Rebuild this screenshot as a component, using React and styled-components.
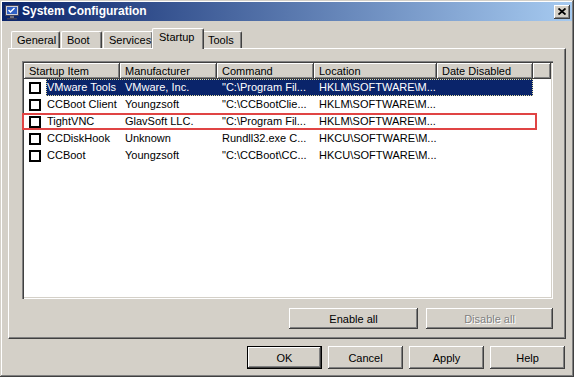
import React from "react";
import styled, { createGlobalStyle, css } from "styled-components";

const Global = createGlobalStyle`
  html, body { margin: 0; padding: 0; background: #d4d0c8; }
  body { font-family: "Liberation Sans", Arial, sans-serif; font-size: 11px; color: #000; }
  * { box-sizing: border-box; }
`;

const raised = css`
  box-shadow: inset -1px -1px #404040, inset 1px 1px #ffffff, inset -2px -2px #808080, inset 2px 2px #d4d0c8;
`;

const Window = styled.div`
  width: 574px;
  height: 377px;
  background: #d4d0c8;
  padding: 2px;
  display: flex;
  flex-direction: column;
  box-shadow: inset -1px -1px #404040, inset 1px 1px #d4d0c8, inset -2px -2px #808080, inset 2px 2px #ffffff;
`;

const TitleBar = styled.div`
  height: 19px;
  display: flex;
  align-items: center;
  padding: 0 2px 0 2px;
  gap: 2px;
  background: linear-gradient(to right, #0a246a 0%, #a6caf0 100%);
`;

const TitleText = styled.div`
  flex: 1;
  color: #fff;
  font-weight: bold;
  font-size: 12px;
  line-height: 19px;
  white-space: nowrap;
`;

const CloseButton = styled.div`
  width: 16px;
  height: 14px;
  background: #d4d0c8;
  display: flex;
  align-items: center;
  justify-content: center;
  ${raised};
`;

const Content = styled.div`
  flex: 1;
  display: flex;
  flex-direction: column;
  padding: 0 6px;
`;

const TabRow = styled.div`
  height: 27px;
  display: flex;
  align-items: flex-end;
  padding-left: 3px;
  position: relative;
  z-index: 1;
`;

const Tab = styled.div`
  width: ${(p) => p.$w}px;
  height: ${(p) => (p.$active ? 21 : 17)}px;
  margin: ${(p) => (p.$active ? "0 -2px -1px -2px" : "0 1px 0 0")};
  padding: ${(p) => (p.$active ? "2px 0 0 6px" : "2px 0 0 5px")};
  background: #d4d0c8;
  border-top: 1px solid #fff;
  border-left: 1px solid #fff;
  border-right: 1px solid #404040;
  border-radius: 2px 2px 0 0;
  box-shadow: inset -1px 0 #808080;
  line-height: 13px;
  white-space: nowrap;
  position: relative;
  z-index: ${(p) => (p.$active ? 2 : 0)};
`;

const Panel = styled.div`
  height: 291px;
  padding: 12px 12px 0 13px;
  border-top: 1px solid #fff;
  border-left: 1px solid #fff;
  border-right: 1px solid #404040;
  border-bottom: 1px solid #404040;
  box-shadow: inset -1px -1px #808080;
  display: flex;
  flex-direction: column;
`;

const List = styled.div`
  position: relative;
  height: 238px;
  background: #fff;
  padding: 2px;
  box-shadow: inset 1px 1px #808080, inset 2px 2px #404040, inset -1px -1px #ffffff, inset -2px -2px #d4d0c8;
  overflow: hidden;
`;

const cols = "96px 97px 97px 123px 96px 1fr";

const HeaderRow = styled.div`
  display: grid;
  grid-template-columns: ${cols};
  height: 16px;
`;

const HeaderCell = styled.div`
  background: #d4d0c8;
  padding-left: 5px;
  line-height: 16px;
  white-space: nowrap;
  overflow: hidden;
  box-shadow: inset -1px -1px #404040, inset 1px 1px #ffffff, inset -2px -2px #808080;
`;

const Row = styled.div`
  display: flex;
  height: 17px;
  align-items: stretch;
`;

const CheckCell = styled.div`
  width: 22px;
  display: flex;
  align-items: center;
  padding-left: 5px;
`;

const Check = styled.div`
  width: 12px;
  height: 12px;
  border: 2px solid #000;
  background: #fff;
`;

const Selection = styled.div`
  display: grid;
  grid-template-columns: 74px 97px 97px 123px 96px;
  background: ${(p) => (p.$selected ? "#0a246a" : "transparent")};
  color: ${(p) => (p.$selected ? "#fff" : "#000")};
  outline: ${(p) => (p.$selected ? "1px dotted #e8e0a0" : "none")};
  outline-offset: -1px;
`;

const Cell = styled.div`
  padding-left: ${(p) => (p.$first ? 1 : 5)}px;
  line-height: 17px;
  white-space: nowrap;
  overflow: hidden;
`;

const Highlight = styled.div`
  position: absolute;
  left: 0;
  top: 52px;
  width: 515px;
  height: 17px;
  border: 2px solid #e04444;
  pointer-events: none;
`;

const ButtonRow = styled.div`
  display: flex;
  justify-content: flex-end;
  gap: ${(p) => p.$gap}px;
  margin-top: ${(p) => p.$top}px;
  padding-right: ${(p) => p.$right || 0}px;
`;

const Button = styled.div`
  width: ${(p) => p.$w}px;
  height: ${(p) => p.$h}px;
  background: #d4d0c8;
  display: flex;
  align-items: center;
  justify-content: center;
  color: ${(p) => (p.$disabled ? "#808080" : "#000")};
  text-shadow: ${(p) => (p.$disabled ? "1px 1px #ffffff" : "none")};
  ${(p) =>
    p.$default
      ? css`
          box-shadow: inset 0 0 0 1px #000, inset -2px -2px #404040, inset 2px 2px #ffffff, inset -3px -3px #808080;
        `
      : raised};
`;

const AppIcon = () => (
  <svg width="16" height="16" viewBox="0 0 16 16">
    <rect x="1.5" y="1.5" width="13" height="10" fill="#d0d0d8" stroke="#404058" />
    <rect x="3" y="3" width="10" height="7" fill="#2f5fc4" />
    <path d="M4.5 6 L6.5 8 L10.5 4" stroke="#fff" strokeWidth="1.4" fill="none" />
    <rect x="6" y="12" width="4" height="2" fill="#707080" />
    <rect x="3" y="14" width="10" height="1.5" fill="#404058" />
  </svg>
);

const CloseGlyph = () => (
  <svg width="8" height="7" viewBox="0 0 8 7">
    <path d="M0.5 0.5 L7.5 6.5 M7.5 0.5 L0.5 6.5" stroke="#000" strokeWidth="1.8" />
  </svg>
);

const tabs = [
  { label: "General", w: 49 },
  { label: "Boot", w: 41 },
  { label: "Services", w: 50 },
  { label: "Startup", w: 52, active: true },
  { label: "Tools", w: 40 },
];

const headers = ["Startup Item", "Manufacturer", "Command", "Location", "Date Disabled", ""];

const rows = [
  ["VMware Tools", "VMware, Inc.", "\"C:\\Program Fil...", "HKLM\\SOFTWARE\\M...", ""],
  ["CCBoot Client", "Youngzsoft", "\"C:\\CCBootClie...", "HKLM\\SOFTWARE\\M...", ""],
  ["TightVNC", "GlavSoft LLC.", "\"C:\\Program Fil...", "HKLM\\SOFTWARE\\M...", ""],
  ["CCDiskHook", "Unknown", "Rundll32.exe C...", "HKCU\\SOFTWARE\\M...", ""],
  ["CCBoot", "Youngzsoft", "\"C:\\CCBoot\\CC...", "HKCU\\SOFTWARE\\M...", ""],
];

export default function App() {
  return (
    <>
      <Global />
      <Window>
        <TitleBar>
          <AppIcon />
          <TitleText>System Configuration</TitleText>
          <CloseButton>
            <CloseGlyph />
          </CloseButton>
        </TitleBar>
        <Content>
          <TabRow>
            {tabs.map((t) => (
              <Tab key={t.label} $w={t.w} $active={t.active}>
                {t.label}
              </Tab>
            ))}
          </TabRow>
          <Panel>
            <List>
              <HeaderRow>
                {headers.map((h, i) => (
                  <HeaderCell key={i}>{h}</HeaderCell>
                ))}
              </HeaderRow>
              {rows.map((r, i) => (
                <Row key={i}>
                  <CheckCell>
                    <Check />
                  </CheckCell>
                  <Selection $selected={i === 0}>
                    {r.map((c, j) => (
                      <Cell key={j} $first={j === 0}>
                        {c}
                      </Cell>
                    ))}
                  </Selection>
                </Row>
              ))}
              <Highlight />
            </List>
            <ButtonRow $gap={8} $top={9}>
              <Button $w={129} $h={21}>Enable all</Button>
              <Button $w={127} $h={21} $disabled>
                Disable all
              </Button>
            </ButtonRow>
          </Panel>
          <ButtonRow $gap={6} $top={7} $right={1}>
            <Button $w={75} $h={23} $default>OK</Button>
            <Button $w={75} $h={23}>Cancel</Button>
            <Button $w={75} $h={23}>Apply</Button>
            <Button $w={75} $h={23}>Help</Button>
          </ButtonRow>
        </Content>
      </Window>
    </>
  );
}
